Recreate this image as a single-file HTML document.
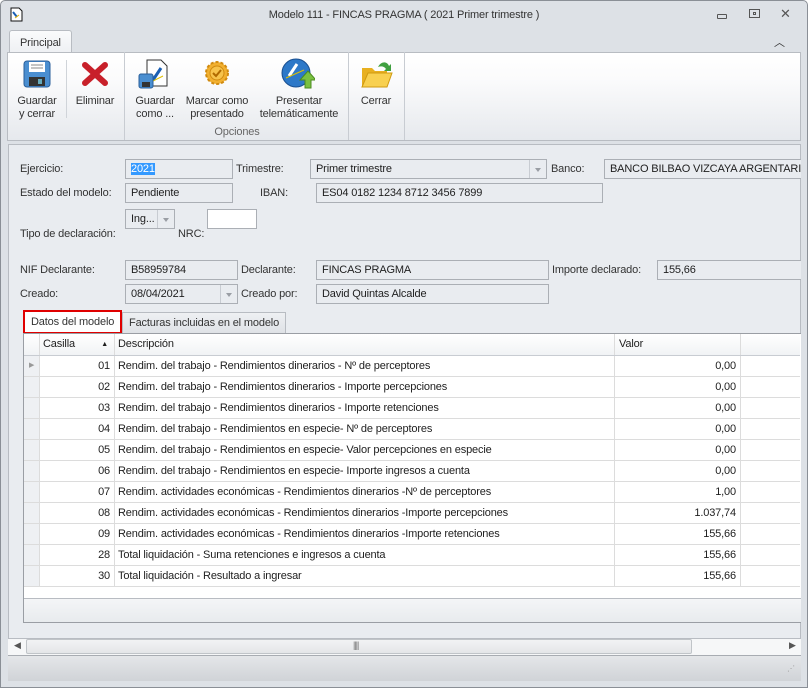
<!DOCTYPE html>
<html><head><meta charset="utf-8"><style>
*{box-sizing:border-box;margin:0;padding:0}
body{width:808px;height:688px;overflow:hidden;background:#fff;font-family:"Liberation Sans","DejaVu Sans",sans-serif;font-size:11px;letter-spacing:-0.15px;color:#1e1e1e;position:relative}
.a{position:absolute}
.win{left:0;top:0;width:808px;height:688px;background:#dde1e6;border:1px solid #8a8f96;border-radius:5px 5px 0 0}
.lbl{position:absolute;font-size:11px;color:#333;white-space:nowrap}
.inp{position:absolute;height:20px;border:1px solid #abafb5;background:#e9ecf0;padding:3px 0 0 5px;white-space:nowrap;overflow:hidden;font-size:11px}
.dd{position:absolute;right:0;top:0;width:17px;height:18px;border-left:1px solid #c8ccd2}
.dd:after{content:"";position:absolute;left:5px;top:8px;border-left:3.5px solid transparent;border-right:3.5px solid transparent;border-top:4px solid #9a9ea4}
.row{position:absolute;left:24px;width:776px;height:21px;border-bottom:1px solid #dcdcdc;background:#fff}
.row div{position:absolute;top:0;height:20px;line-height:20px;border-right:1px solid #dcdcdc;white-space:nowrap}
.c0{left:0;width:16px;background:#eef0f3}
.c1{left:16px;width:75px;text-align:right;padding-right:4px}
.c2{left:91px;width:500px;padding-left:3px}
.c3{left:591px;width:126px;text-align:right;padding-right:4px}
.btn{position:absolute;text-align:center;font-size:11px;color:#333;line-height:13px}
</style></head><body>
<div class="a win"></div>
<svg class="a" style="left:10px;top:7px" width="13" height="15"><path d="M1 1h8l3 3v10H1z" fill="#fff" stroke="#111"/><path d="M3 5l4 5" stroke="#1a5fb4" stroke-width="2"/><path d="M5 11l4-3" stroke="#e0b000"/></svg>
<div class="lbl" style="left:0;width:808px;text-align:center;top:9px;color:#333">Modelo 111 - FINCAS PRAGMA ( 2021 Primer trimestre )</div>
<div class="a" style="left:717px;top:14px;width:10px;height:5px;border:1px solid #555;border-radius:1px"></div>
<div class="a" style="left:749px;top:9px;width:11px;height:9px;border:1px solid #555"><div class="a" style="left:3px;top:2px;width:3px;height:3px;border:1px solid #555"></div></div>
<div class="lbl" style="left:780px;top:6px;font-size:13px;color:#555">✕</div>
<div class="a" style="left:9px;top:30px;width:63px;height:23px;background:linear-gradient(#fafbfc,#eef0f3);border:1px solid #b8bcc2;border-bottom:none;border-radius:3px 3px 0 0"></div>
<div class="lbl" style="left:20px;top:37px">Principal</div>
<div class="lbl" style="left:774px;top:34px;font-size:11px;color:#333">︿</div>
<div class="a" style="left:7px;top:52px;width:794px;height:89px;background:linear-gradient(#fff,#fbfbfc 30%,#e6e9ed);border:1px solid #b8bcc2"></div>
<div class="a" style="left:66px;top:60px;width:1px;height:58px;background:#d0d4d9"></div>
<div class="a" style="left:124px;top:52px;width:1px;height:88px;background:#c8ccd2"></div>
<div class="a" style="left:348px;top:52px;width:1px;height:88px;background:#c8ccd2"></div>
<div class="a" style="left:404px;top:52px;width:1px;height:88px;background:#c8ccd2"></div>
<svg class="a" style="left:23px;top:60px" width="28" height="28"><rect x="1" y="1" width="26" height="26" rx="3" fill="#4a8ed0" stroke="#2a5f9a"/><rect x="6" y="2" width="16" height="10" fill="#fff"/><path d="M8 5h12M8 8h12" stroke="#888"/><rect x="6" y="17" width="16" height="9" fill="#333"/><rect x="15" y="19" width="4" height="5" fill="#6ab"/></svg>
<svg class="a" style="left:82px;top:62px" width="26" height="24"><path d="M3 3L23 21M23 3L3 21" stroke="#c8202a" stroke-width="6" stroke-linecap="round"/></svg>
<svg class="a" style="left:138px;top:58px" width="34" height="32"><path d="M9 2h14l6 6v20H9z" fill="#fff" stroke="#333"/><path d="M15 22l8-12" stroke="#1a5fb4" stroke-width="3"/><path d="M13 24l12-6" stroke="#e0c000"/><rect x="1" y="16" width="14" height="14" rx="2" fill="#4a8ed0" stroke="#2a5f9a"/><rect x="4" y="24" width="8" height="5" fill="#333"/></svg>
<svg class="a" style="left:204px;top:60px" width="26" height="26"><circle cx="13" cy="13" r="11" fill="#f2b030" stroke="#d08a10" stroke-width="2" stroke-dasharray="3 2"/><circle cx="13" cy="13" r="7" fill="#f7c34c" stroke="#d08a10"/><path d="M9 13l3 3 5-6" stroke="#b06a00" stroke-width="2" fill="none"/></svg>
<svg class="a" style="left:281px;top:58px" width="34" height="32"><circle cx="15" cy="15" r="14" fill="#2d78c8"/><circle cx="15" cy="15" r="14" fill="none" stroke="#1a4f90"/><path d="M8 18l8-12" stroke="#fff" stroke-width="3"/><path d="M5 20l18-8" stroke="#e0c000"/><path d="M24 30v-8h-5l8-9 8 9h-5v8z" fill="#7ac040" stroke="#4a8a20"/></svg>
<svg class="a" style="left:360px;top:58px" width="34" height="32"><path d="M2 10h10l3 3h12v16H2z" fill="#e8b020"/><path d="M2 29l6-14h24l-5 14z" fill="#f8d050" stroke="#d09a10"/><path d="M18 9c3-6 9-6 11-1l2-2v7h-7l2-2c-2-3-5-3-8-2z" fill="#40a040"/></svg>
<div class="btn" style="left:14px;top:95px;width:46px">Guardar<br>y cerrar</div>
<div class="btn" style="left:70px;top:95px;width:50px">Eliminar</div>
<div class="btn" style="left:130px;top:95px;width:50px">Guardar<br>como ...</div>
<div class="btn" style="left:182px;top:95px;width:70px">Marcar como<br>presentado</div>
<div class="btn" style="left:254px;top:95px;width:90px">Presentar<br>telemáticamente</div>
<div class="btn" style="left:356px;top:95px;width:40px">Cerrar</div>
<div class="btn" style="left:125px;top:126px;width:224px;color:#666">Opciones</div>
<div class="a" style="left:8px;top:144px;width:793px;height:495px;background:#e9ecf0;border:1px solid #b8bcc2"></div>
<div class="lbl" style="left:20px;top:163px">Ejercicio:</div>
<div class="inp" style="left:125px;top:159px;width:108px"><span style="background:#3399ff;color:#fff">2021</span></div>
<div class="lbl" style="left:236px;top:163px">Trimestre:</div>
<div class="inp" style="left:310px;top:159px;width:237px">Primer trimestre<div class="dd"></div></div>
<div class="lbl" style="left:551px;top:163px">Banco:</div>
<div class="inp" style="left:604px;top:159px;width:197px;border-right:none">BANCO BILBAO VIZCAYA ARGENTARIA,</div>
<div class="lbl" style="left:20px;top:187px">Estado del modelo:</div>
<div class="inp" style="left:125px;top:183px;width:108px">Pendiente</div>
<div class="lbl" style="left:260px;top:187px">IBAN:</div>
<div class="inp" style="left:316px;top:183px;width:287px">ES04 0182 1234 8712 3456 7899</div>
<div class="inp" style="left:125px;top:209px;width:50px">Ing...<div class="dd"></div></div>
<div class="inp" style="left:207px;top:209px;width:50px;background:#fff"></div>
<div class="lbl" style="left:20px;top:228px">Tipo de declaración:</div>
<div class="lbl" style="left:178px;top:228px">NRC:</div>
<div class="lbl" style="left:20px;top:264px">NIF Declarante:</div>
<div class="inp" style="left:125px;top:260px;width:113px">B58959784</div>
<div class="lbl" style="left:241px;top:264px">Declarante:</div>
<div class="inp" style="left:316px;top:260px;width:233px">FINCAS PRAGMA</div>
<div class="lbl" style="left:552px;top:264px">Importe declarado:</div>
<div class="inp" style="left:657px;top:260px;width:144px;border-right:none">155,66</div>
<div class="lbl" style="left:20px;top:288px">Creado:</div>
<div class="inp" style="left:125px;top:284px;width:113px">08/04/2021<div class="dd" style="background:#e9ecf0"></div></div>
<div class="lbl" style="left:241px;top:288px">Creado por:</div>
<div class="inp" style="left:316px;top:284px;width:233px">David Quintas Alcalde</div>
<div class="a" style="left:122px;top:312px;width:164px;height:22px;background:linear-gradient(#eef0f3,#dfe2e6);border:1px solid #b8bcc2"></div>
<div class="lbl" style="left:129px;top:317px">Facturas incluidas en el modelo</div>
<div class="a" style="left:23px;top:310px;width:99px;height:24px;background:#fff;border:2px solid #e00000"></div>
<div class="lbl" style="left:31px;top:316px">Datos del modelo</div>
<div class="a" style="left:23px;top:333px;width:778px;height:290px;background:#fff;border:1px solid #9a9ea4;border-right:none"></div>
<div class="row" style="top:334px;height:22px;background:linear-gradient(#fff,#f1f3f5);border-bottom:1px solid #c8ccd2"><div class="c0" style="background:none;height:21px"></div><div class="c1" style="text-align:left;padding-left:3px;height:21px;line-height:21px">Casilla<span style="position:absolute;right:6px;font-size:7px">▲</span></div><div class="c2" style="height:21px;line-height:21px">Descripción</div><div class="c3" style="text-align:left;padding-left:4px;height:21px;line-height:21px">Valor</div></div>
<div class="row" style="top:356px"><div class="c0"><span style="position:absolute;left:5px;top:0;font-size:7px;color:#999">▶</span></div><div class="c1">01</div><div class="c2">Rendim. del trabajo - Rendimientos dinerarios - Nº de perceptores</div><div class="c3">0,00</div></div>
<div class="row" style="top:377px"><div class="c0"></div><div class="c1">02</div><div class="c2">Rendim. del trabajo - Rendimientos dinerarios - Importe percepciones</div><div class="c3">0,00</div></div>
<div class="row" style="top:398px"><div class="c0"></div><div class="c1">03</div><div class="c2">Rendim. del trabajo - Rendimientos dinerarios - Importe retenciones</div><div class="c3">0,00</div></div>
<div class="row" style="top:419px"><div class="c0"></div><div class="c1">04</div><div class="c2">Rendim. del trabajo - Rendimientos en especie- Nº de perceptores</div><div class="c3">0,00</div></div>
<div class="row" style="top:440px"><div class="c0"></div><div class="c1">05</div><div class="c2">Rendim. del trabajo - Rendimientos en especie- Valor percepciones en especie</div><div class="c3">0,00</div></div>
<div class="row" style="top:461px"><div class="c0"></div><div class="c1">06</div><div class="c2">Rendim. del trabajo - Rendimientos en especie- Importe ingresos a cuenta</div><div class="c3">0,00</div></div>
<div class="row" style="top:482px"><div class="c0"></div><div class="c1">07</div><div class="c2">Rendim. actividades económicas - Rendimientos dinerarios -Nº de perceptores</div><div class="c3">1,00</div></div>
<div class="row" style="top:503px"><div class="c0"></div><div class="c1">08</div><div class="c2">Rendim. actividades económicas - Rendimientos dinerarios -Importe percepciones</div><div class="c3">1.037,74</div></div>
<div class="row" style="top:524px"><div class="c0"></div><div class="c1">09</div><div class="c2">Rendim. actividades económicas - Rendimientos dinerarios -Importe retenciones</div><div class="c3">155,66</div></div>
<div class="row" style="top:545px"><div class="c0"></div><div class="c1">28</div><div class="c2">Total liquidación - Suma retenciones e ingresos a cuenta</div><div class="c3">155,66</div></div>
<div class="row" style="top:566px"><div class="c0"></div><div class="c1">30</div><div class="c2">Total liquidación - Resultado a ingresar</div><div class="c3">155,66</div></div>
<div class="a" style="left:24px;top:598px;width:777px;height:24px;background:linear-gradient(#f4f5f7,#e8ebee);border-top:1px solid #b8bcc2"></div>
<div class="a" style="left:8px;top:638px;width:793px;height:17px;background:#f6f7f8;border-top:1px solid #b8bcc2"></div>
<div class="a" style="left:26px;top:639px;width:666px;height:15px;background:linear-gradient(#f2f3f4,#e4e6e8);border:1px solid #c0c4c8;border-radius:2px"></div>
<div class="lbl" style="left:14px;top:640px;font-size:9px;color:#555">◀</div>
<div class="lbl" style="left:789px;top:640px;font-size:9px;color:#555">▶</div>
<div class="lbl" style="left:353px;top:640px;font-size:9px;color:#777;letter-spacing:-1px">||||</div>
<div class="a" style="left:8px;top:655px;width:793px;height:26px;background:linear-gradient(#e4e6e9,#d0d3d7);border-top:1px solid #a8acb2"></div>
<div class="lbl" style="left:787px;top:664px;font-size:8px;color:#999;letter-spacing:-1px">⋰</div>
</body></html>
